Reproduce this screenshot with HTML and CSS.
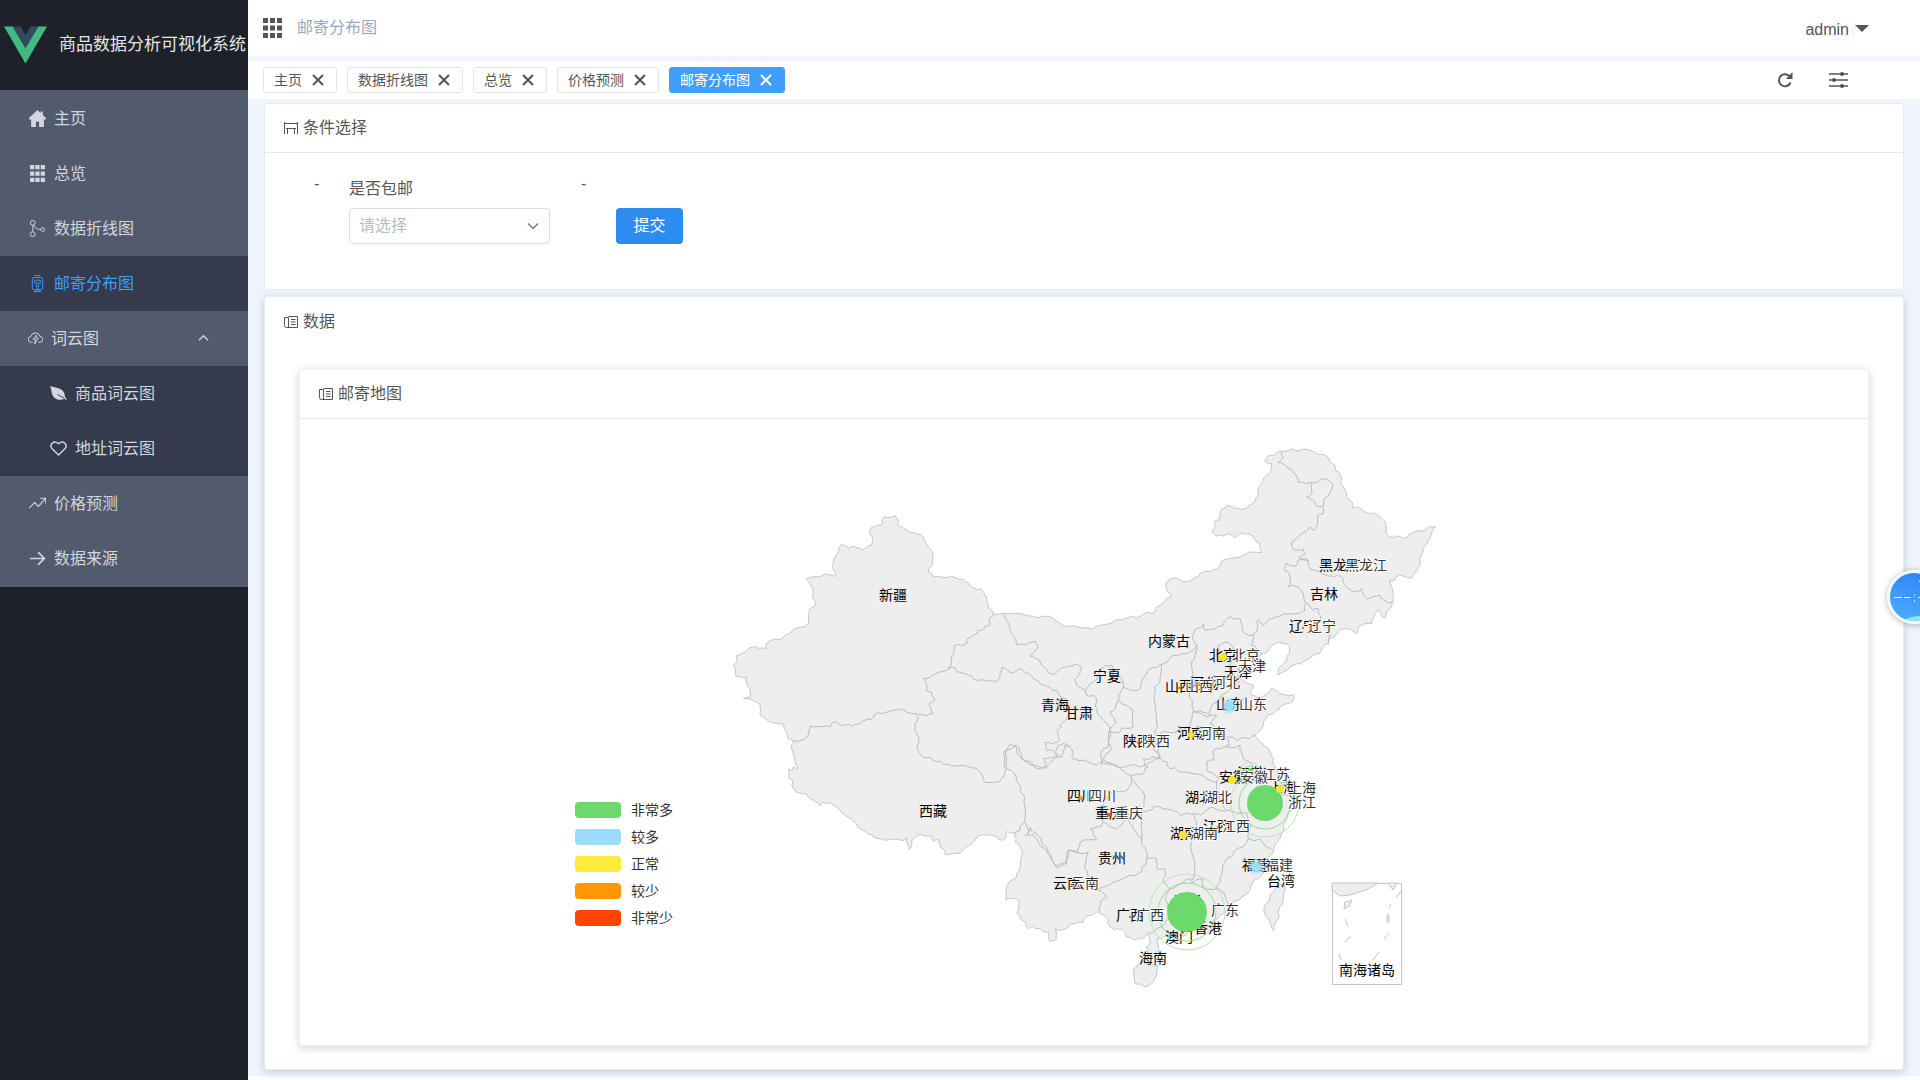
FILE: index.html
```html
<!DOCTYPE html>
<html lang="zh-CN">
<head>
<meta charset="utf-8">
<meta name="viewport" content="width=device-width, initial-scale=1">
<title>商品数据分析可视化系统</title>
<link rel="stylesheet" href="styles.css">
</head>
<body>
<aside class="sidebar">
  <div class="brand">
    <svg class="brand-logo" viewBox="0 0 44 38" aria-hidden="true"><path fill="#42b983" d="M0 0h9l13 22L35 0h9L22 38z"/><path fill="#35495e" d="M9 0h8l5 9 5-9h8L22 22z"/></svg>
    <span>商品数据分析可视化系统</span>
  </div>
  <nav class="menu">
    <a class="item" href="#"><svg class="icon" viewBox="0 0 16 16"><path fill="currentColor" d="M8 0 0 7.5V9h2v7h4.500v-5h3v5H14V9h2V7.500L13 4.700V1.500h-2v1.300z"/></svg>主页</a>
    <a class="item" href="#"><svg class="icon" viewBox="0 0 16 16"><path fill="currentColor" d="M1 0h4v4H1zM6 0h4v4H6zM11 0h4v4h-4zM1 6h4v4H1zM6 6h4v4H6zM11 6h4v4h-4zM1 12h4v4H1zM6 12h4v4H6zM11 12h4v4h-4z"/></svg>总览</a>
    <a class="item" href="#"><svg class="icon" viewBox="0 0 16 18"><g fill="none" stroke="currentColor"><circle cx="3" cy="3" r="2.500"/><circle cx="3" cy="15" r="2.500"/><circle cx="13.500" cy="10" r="2"/><path d="M3 5.500v7M4 5.500q2 4.500 7.500 4.500"/></g></svg>数据折线图</a>
    <a class="item active" href="#"><svg class="icon" viewBox="0 0 16 18"><g fill="none" stroke="currentColor"><rect x="2.500" y="2.500" width="11" height="13" rx="2"/><path d="M5 .500h6M5 5.500h6v3H5zM4 17.500h8M6 17l2-3 2 3"/><circle cx="8" cy="11.500" r="1.500"/></g></svg>邮寄分布图</a>
    <a class="item parent" href="#"><svg class="icon small" viewBox="0 0 16 16"><g fill="none" stroke="currentColor"><path d="M5 12H3.500A3 3 0 0 1 3 6a5 5 0 0 1 9.800 0 3 3 0 0 1 0 6H11"/><path d="M9 4.500 5.500 9H8l-1 5 4-6.500H8.500z"/></g></svg>词云图<svg class="caret" viewBox="0 0 12 12"><path fill="none" stroke="currentColor" stroke-width="1.500" d="m1 8 5-5 5 5"/></svg></a>
    <a class="item sub" href="#"><svg class="icon" viewBox="0 0 18 16"><path fill="currentColor" d="M0 0c7 2 12 2 15 7l1 5 2 2-1 .700-2-1.500c-3 2.800-9 1.500-11-1.500C1 8 2 4 0 0z"/><path d="m8 9 7 4" stroke="#333b4d"/></svg>商品词云图</a>
    <a class="item sub" href="#"><svg class="icon" viewBox="0 0 18 16"><path fill="none" stroke="currentColor" stroke-width="1.500" d="M9 15 2 8C-1 4 4-1.500 9 3c5-4.500 10 1 7 5z"/></svg>地址词云图</a>
    <a class="item" href="#"><svg class="icon" viewBox="0 0 18 14"><path fill="none" stroke="currentColor" stroke-width="1.200" d="m0 12 6-6 4 4 7-8M12 1.500h5.500V7"/></svg>价格预测</a>
    <a class="item" href="#"><svg class="icon" viewBox="0 0 16 16"><path fill="none" stroke="currentColor" stroke-width="1.500" d="M1 8h13M8.500 2l6 6-6 6"/></svg>数据来源</a>
  </nav>
</aside>

<div class="main">
  <header class="topbar">
    <svg class="grid-icon" viewBox="0 0 19 20"><path fill="#555" d="M0 0h5v5H0zM7 0h5v5H7zM14 0h5v5h-5zM0 7.500h5v5H0zM7 7.500h5v5H7zM14 7.500h5v5h-5zM0 15h5v5H0zM7 15h5v5H7zM14 15h5v5h-5z"/></svg>
    <span class="crumb">邮寄分布图</span>
    <button class="user" type="button">admin<svg viewBox="0 0 14 7"><path fill="currentColor" d="M0 0h14L7 7z"/></svg></button>
  </header>

  <div class="tabs">
    <a class="tab" href="#">主页<svg viewBox="0 0 12 12"><path d="m1 1 10 10M11 1 1 11"/></svg></a>
    <a class="tab" href="#">数据折线图<svg viewBox="0 0 12 12"><path d="m1 1 10 10M11 1 1 11"/></svg></a>
    <a class="tab" href="#">总览<svg viewBox="0 0 12 12"><path d="m1 1 10 10M11 1 1 11"/></svg></a>
    <a class="tab" href="#">价格预测<svg viewBox="0 0 12 12"><path d="m1 1 10 10M11 1 1 11"/></svg></a>
    <a class="tab current" href="#">邮寄分布图<svg viewBox="0 0 12 12"><path d="m1 1 10 10M11 1 1 11"/></svg></a>
    <div class="tools">
      <button type="button" aria-label="刷新"><svg width="16" height="16" viewBox="0 0 16 16"><path fill="none" stroke="#555" stroke-width="2" d="M13.500 10.500a6 6 0 1 1-.500-5.500"/><path fill="#555" d="M15.500 0v7H9z"/></svg></button>
      <button type="button" aria-label="设置"><svg width="19" height="16" viewBox="0 0 19 16"><path stroke="#555" stroke-width="1.500" d="M0 2h19M0 8h19M0 14h19"/><g fill="#555"><circle cx="13" cy="2" r="2"/><circle cx="5" cy="8" r="2"/><circle cx="13" cy="14" r="2"/></g></svg></button>
    </div>
  </div>

  <main class="content">
    <section class="card">
      <h2 class="card-title"><svg viewBox="0 0 14 12"><path fill="none" stroke="currentColor" d="M.500 0v12M13.500 0v12M0 1.500h14M2 6.500h10M3.500 6v6M10.500 6v6"/></svg>条件选择</h2>
      <form class="filters">
        <span class="dash">-</span>
        <div class="field">
          <label for="postage">是否包邮</label>
          <div class="select-box">
            <select id="postage"><option>请选择</option><option>是</option><option>否</option></select>
            <svg viewBox="0 0 12 12"><path fill="none" stroke="#777" stroke-width="1.500" d="m1 3.500 5 5 5-5"/></svg>
          </div>
        </div>
        <span class="dash">-</span>
        <button class="submit" type="button">提交</button>
      </form>
    </section>

    <section class="card raised">
      <h2 class="card-title plain"><svg viewBox="0 0 14 12"><path fill="none" stroke="currentColor" d="M4.500.500h9v11h-11q-2 0-2-2v-8h4v10M7 3.500h4.500M7 6h4.500M7 8.500h4.500"/></svg>数据</h2>
      <div class="data">
        <section class="card chart">
          <h2 class="card-title"><svg viewBox="0 0 14 12"><path fill="none" stroke="currentColor" d="M4.500.500h9v11h-11q-2 0-2-2v-8h4v10M7 3.500h4.500M7 6h4.500M7 8.500h4.500"/></svg>邮寄地图</h2>
          <svg class="map" viewBox="300 417 1568 626" role="img" aria-label="邮寄地图">
            <g class="legend">
              <rect x="575" y="800" width="46" height="16" rx="4" fill="#6bd96b"/><text x="631" y="808">非常多</text>
              <rect x="575" y="827" width="46" height="16" rx="4" fill="#9bdcfa"/><text x="631" y="835">较多</text>
              <rect x="575" y="854" width="46" height="16" rx="4" fill="#ffeb3b"/><text x="631" y="862">正常</text>
              <rect x="575" y="881" width="46" height="16" rx="4" fill="#ff9800"/><text x="631" y="889">较少</text>
              <rect x="575" y="908" width="46" height="16" rx="4" fill="#ff4500"/><text x="631" y="916">非常少</text>
            </g>
            <g id="land" class="land"></g>
            <g id="borders" class="borders"></g>
            <g class="islands">
              <path class="frame" d="M1332.500 881.500h69v101h-69z"/>
              <path d="M1332 881h46l-12 7-16 5-10 1-8-6zM1388 881h9l-4 7zM1345 900l7-2-3 6-5 3zM1401 889l-5 7M1391 902l-2 4M1345 917l3 7M1387 913h2v7h-2zM1345 940l6-6M1384 937l5-6M1339 952l2 6M1373 958l6-8"/>
            </g>
            <g class="name">
              <text x="879" y="593">新疆</text><text x="919" y="809">西藏</text><text x="1041" y="703">青海</text><text x="1065" y="711">甘肃</text><text x="1093" y="674">宁夏</text><text x="1148" y="639">内蒙古</text><text x="1310" y="592">吉林</text><text x="1319" y="563">黑龙江</text><text x="1289" y="624">辽宁</text><text x="1209" y="653">北京</text><text x="1224" y="670">天津</text><text x="1190" y="681">河北</text><text x="1165" y="684">山西</text><text x="1216" y="702">山东</text><text x="1177" y="731">河南</text><text x="1123" y="739">陕西</text><text x="1237" y="771">江苏</text><text x="1219" y="775">安徽</text><text x="1269" y="785">上海</text><text x="1251" y="800">浙江</text><text x="1185" y="795">湖北</text><text x="1203" y="824">江西</text><text x="1170" y="831">湖南</text><text x="1067" y="794">四川</text><text x="1095" y="811">重庆</text><text x="1098" y="856">贵州</text><text x="1053" y="881">云南</text><text x="1116" y="913">广西</text><text x="1173" y="898">广东</text><text x="1194" y="926">香港</text><text x="1165" y="935">澳门</text><text x="1139" y="956">海南</text><text x="1242" y="863">福建</text><text x="1267" y="879">台湾</text><text x="1339" y="968">南海诸岛</text>
            </g>
            <g class="ripple">
              <circle cx="1265" cy="801" r="26"/><circle class="far" cx="1265" cy="801" r="34"/>
              <circle cx="1187" cy="910" r="29"/><circle class="far" cx="1187" cy="910" r="38"/>
              <circle cx="1250" cy="770" r="6"/><circle class="far" cx="1250" cy="770" r="10"/>
            </g>
            <g fill="#6bd96b"><circle cx="1265" cy="801" r="18"/><circle cx="1187" cy="910" r="20"/><circle cx="1250" cy="769" r="3"/></g>
            <g fill="#9bdcfa"><circle cx="1229" cy="704" r="5"/><circle cx="1256" cy="865" r="5"/><circle cx="1229" cy="704" r="8" opacity=".4"/><circle cx="1256" cy="865" r="8" opacity=".4"/></g>
            <g class="label">
              <text x="1345" y="563">黑龙江</text><text x="1308" y="624">辽宁</text><text x="1212" y="680">河北</text><text x="1185" y="684">山西</text><text x="1232" y="653">北京</text><text x="1238" y="664">天津</text><text x="1239" y="702">山东</text><text x="1198" y="731">河南</text><text x="1142" y="739">陕西</text><text x="1262" y="772">江苏</text><text x="1240" y="775">安徽</text><text x="1288" y="786">上海</text><text x="1288" y="800">浙江</text><text x="1204" y="795">湖北</text><text x="1222" y="824">江西</text><text x="1190" y="831">湖南</text><text x="1088" y="794">四川</text><text x="1115" y="811">重庆</text><text x="1071" y="881">云南</text><text x="1136" y="913">广西</text><text x="1211" y="908">广东</text><text x="1265" y="863">福建</text>
            </g>
            <g fill="#ffe62e"><circle cx="1223" cy="655" r="4"/><circle cx="1191" cy="733" r="3"/><circle cx="1232" cy="778" r="4"/><circle cx="1280" cy="787" r="4"/><circle cx="1183" cy="833" r="4"/></g>
            <g fill="#ff9800"><circle cx="1081" cy="796" r="2"/></g>
            <g fill="#ff4500"><circle cx="1109" cy="813" r="2"/><circle cx="1179" cy="686" r="1"/><circle cx="1303" cy="626" r="1"/><circle cx="1231" cy="667" r="1"/><circle cx="1198" cy="797" r="1"/><circle cx="1218" cy="825" r="1"/><circle cx="1130" cy="915" r="1"/><circle cx="1340" cy="565" r="1"/><circle cx="1138" cy="741" r="1"/></g>
          </svg>
        </section>
      </div>
    </section>
  </main>
</div>

<button class="float" type="button" aria-label="网速"><svg viewBox="0 0 48 48"><path d="M10 48q14-7 38-6v6z" fill="#8fe3fb"/><path d="M29 8l8 4" stroke="#fff"/><path stroke="#e8fbd8" d="M4 24.500h8M14 24.500h7M28 24.500h12"/><path fill="#bfe3ff" d="M24 21h1v2h-1zM24 27h1v2h-1z"/></svg></button>
<script src="map.js"></script>
</body>
</html>
```

FILE: styles.css
```css
* { box-sizing: border-box; }
body {
  margin: 0;
  min-height: 100vh;
  display: flex;
  background: #fdfefe;
  color: #555;
  font: 16px/24px "Liberation Sans", "Noto Sans CJK SC", sans-serif;
}
a { color: inherit; text-decoration: none; }
button { font: inherit; color: inherit; border: 0; padding: 0; background: none; }
svg { display: block; flex: none; }

.sidebar { flex: 0 0 248px; background: #1e2128; color: #d3d6dc; }
.brand { height: 90px; display: flex; align-items: center; gap: 12px; padding-left: 4px; font-size: 17px; white-space: nowrap; color: #e4e6ea; overflow: hidden; }
.brand-logo { width: 43px; height: 38px; }
.menu { background: #525b6d; padding: 1px 0; }
.item { display: flex; align-items: center; gap: 8px; height: 55px; padding-left: 29px; }
.icon { width: 17px; height: 17px; }
.icon.small { width: 15px; height: 15px; }
.item.active, .item.sub { background: #333b4d; }
.item.active { color: #409eff; }
.item.parent { padding-left: 28px; }
.item.sub { padding-left: 50px; }
.caret { width: 11px; height: 11px; margin: 0 39px 0 auto; }

.main { flex: 1; min-width: 0; }
.topbar { height: 56px; display: flex; align-items: center; gap: 15px; padding: 0 51px 0 15px; background: #fff; }
.grid-icon { width: 19px; height: 20px; }
.crumb { color: #97a8be; }
.user { display: flex; align-items: center; gap: 6px; margin-left: auto; padding-top: 4px; }
.user svg { width: 14px; height: 7px; margin-bottom: 4px; }

.tabs { display: flex; align-items: center; gap: 10px; height: 43px; padding: 0 72px 0 15px; border-top: 5px solid #f0f5fd; background: #fff; }
.tab { display: flex; align-items: center; gap: 10px; height: 26px; padding: 0 12px 0 10px; border: 1px solid #dfe2e8; border-radius: 3px; font-size: 14px; }
.tab svg { width: 12px; height: 12px; fill: none; stroke: currentColor; stroke-width: 2; }
.tab.current { background: #409eff; border-color: #409eff; color: #fff; }
.tools { display: flex; gap: 36px; margin-left: auto; }

.content { padding: 4px 16px 6px; background: #f0f5fd; }
.card { background: #fff; border: 1px solid #e6ebf2; border-radius: 4px; }
.card + .card { margin-top: 6px; }
.raised { box-shadow: 0 2px 8px rgba(60, 80, 110, .25); }
.card-title { display: flex; align-items: center; gap: 5px; height: 49px; margin: 0; padding-left: 19px; border-bottom: 1px solid #e6e8ec; font-size: 16px; font-weight: 400; }
.card-title svg { width: 14px; height: 12px; }
.card-title.plain { border-bottom: 0; }

.filters { display: flex; align-items: flex-start; padding: 24px 0 45px 49px; }
.dash { flex: 0 0 35px; line-height: 14px; }
.field { flex: 0 0 232px; }
.field label { display: block; margin-bottom: 7px; }
.select-box { position: relative; width: 201px; }
.select-box select { width: 100%; height: 36px; padding: 0 9px; appearance: none; border: 1px solid #d9dce2; border-radius: 4px; background: #fff; color: #b8bcc4; font: inherit; }
.select-box svg { position: absolute; right: 11px; top: 12px; width: 12px; height: 12px; pointer-events: none; }
.submit { align-self: flex-end; width: 67px; height: 36px; border-radius: 4px; background: #2d8cf0; color: #fff; }

.data { padding: 23px 34px 23px; }
.chart { border-color: #eef0f2; box-shadow: 0 2px 8px rgba(0, 0, 0, .18); }
.map { width: 100%; height: auto; font-size: 14px; }
.map text { dominant-baseline: central; }
.legend { fill: #333; }
.land path { fill: #eee; stroke: #c6c6c6; stroke-linejoin: round; }
.borders path { fill: none; stroke: #bbb; stroke-linejoin: round; }
.islands path { fill: #eee; stroke: #c4c4c4; }
.islands .frame { fill: none; }
.name { fill: #000; }
.label { fill: #333; stroke: #fff; stroke-width: 2; paint-order: stroke; }
.ripple circle { fill: none; stroke: #8fdf8f; }
.ripple .far { stroke: #b5e8b5; }

.float { position: fixed; right: -21px; top: 570px; width: 54px; height: 54px; overflow: hidden; border: 3px solid #f2fbff; border-radius: 50%; background: linear-gradient(200deg, #2a80f5, #4fb0ff); box-shadow: 0 1px 6px rgba(0, 0, 0, .3); }
```

FILE: map.js
```js
// Each sheet is traced at three units per map unit, from its own origin.
const sheets = { w: [720, 480], n: [1050, 480], e: [1180, 430], s: [1000, 680] };

// A small seeded generator keeps the fractal coastline stable between loads.
let seed = 7;
const rand = () => (seed = (seed * 16807) % 2147483647) / 2147483647 - 0.5;

function points(sheet, list) {
  const [ox, oy] = sheets[sheet];
  return list.trim().split(/\s+/).map(p => {
    const [x, y] = p.split(",").map(Number);
    return [ox + x / 3, oy + y / 3];
  });
}

function roughen(pts) {
  let out = pts;
  for (let pass = 0; pass < 2; pass++) {
    const next = [out[0]];
    for (let i = 1; i < out.length; i++) {
      const [ax, ay] = out[i - 1], [bx, by] = out[i];
      const d = Math.hypot(bx - ax, by - ay), k = d > 3 ? Math.min(d * 0.4, 4) : 0;
      next.push([(ax + bx) / 2 + rand() * k, (ay + by) / 2 + rand() * k], [bx, by]);
    }
    out = next;
  }
  return out;
}

function draw(group, pts, closed) {
  const path = document.createElementNS("http://www.w3.org/2000/svg", "path");
  path.setAttribute("d", "M" + roughen(pts).map(p => p[0].toFixed(1) + " " + p[1].toFixed(1)).join("L") + (closed ? "Z" : ""));
  document.getElementById(group).append(path);
}

const mainland = [
  ["w", "990,403 925,402 852,394 820,395 800,360 795,340 785,322 770,322 735,298 715,291 640,283 626,270 627,258 637,244 636,208 622,190 612,168 585,152 570,152 535,132 526,101 492,104 488,125 456,135 449,150 455,190 430,203 420,198 385,198 364,188 352,215 340,240 338,260 346,282 318,275 258,292 270,303 278,345 285,372 270,380 265,425 238,435 185,470 150,475 138,500 112,503 108,492 85,500 50,520 46,545 38,550 48,583 78,585 85,615 92,642 70,650 105,658 120,675 122,700 135,708 192,727 200,755 220,776 213,795 222,820 235,858 220,855 217,865 206,860 207,880 218,895 220,920 228,930 258,935 300,972 308,960 330,962 365,992 395,1012 410,1030 440,1052 465,1068 500,1075 535,1073 560,1068 567,1102 575,1075 595,1060 635,1065 640,1080 655,1072 660,1095 675,1105 675,1118 720,1115 745,1092 790,1058 815,1057 850,1075 862,1048 885,1052 885,1080 900,1095 902,1150 890,1175"],
  ["s", "30,598 18,655 45,650 60,660 50,690 75,720 85,740 100,735 125,745 145,750 150,780 165,775 165,740 200,740 215,725 250,720 270,700 295,690 310,700 330,735 345,745 365,740 380,765 420,768 445,755 450,775 438,795 445,820 465,825 475,795 470,770 495,762 540,760 570,745 600,740 650,712 690,690 700,660 735,640 750,610 775,590 800,560 795,535 812,520 830,480 850,430 862,400 880,370 865,340 800,318 848,318 860,308 840,300 830,270 820,230 800,195 780,180 765,160 790,120 830,85 850,70 880,55 882,38"],
  ["n", "690,635 665,618 645,640 620,648 605,640 610,610 585,600 565,585 565,560 580,545 600,530 640,515 665,490 690,482 717,490 712,520 685,560 682,578 700,570 740,545 790,520 835,485 860,455"],
  ["e", "475,595 500,590 530,605 540,580 575,575 590,540 600,535 615,558 620,540 635,520 637,470 630,445 655,430 695,437 720,400 730,350 750,320 755,300 767,284 740,290 690,305 680,318 630,315 620,290 610,265 580,242 555,240 515,228 505,200 490,165 485,140 465,100 440,72 420,68 380,52 340,52 300,58 265,72 253,85 275,95 272,120 250,140 235,170 225,207 185,232 140,220 120,250 97,297 108,312 150,305 165,318 185,303 215,310 240,340 245,362 200,365 150,380 130,385 110,410 60,425 30,448 0,445"],
  ["n", "375,287 350,300 348,320 363,345 330,370 310,395 260,408 200,412 125,442 60,433 20,418"]
];
draw("land", mainland.flatMap(([s, l]) => points(s, l)), true);
draw("land", points("s", "855,612 850,650 835,690 822,745 810,720 795,700 793,675 810,640 835,605"), true);
draw("land", points("s", "400,860 430,835 475,850 470,880 435,915 405,905"), true);

[
  ["w", "820,395 808,408 810,430 790,442 775,445 745,468 730,490 703,492 698,520 683,562 655,570 610,590 620,600 618,625 635,632 645,655 627,665 638,695 600,698 585,695"],
  ["w", "585,695 550,683 515,686 475,692 455,712 430,715 395,732 365,730 348,718 330,735 300,735 272,732 255,770 220,776"],
  ["w", "585,695 595,705 585,740 595,765 592,795 610,825 650,838 695,852 760,858 785,875 790,895 830,900 852,880 858,857"],
  ["w", "683,562 705,557 730,575 755,582 760,592 800,597 825,600 840,585 845,557 880,573 905,562 940,590 985,615 1010,625 1040,660 1045,700 1025,725 1012,745 1018,775 1000,785 975,782 980,805 1010,815 1025,825"],
  ["w", "858,857 855,810 870,787 890,790 905,825 940,850 980,857 1000,830 1025,825 1035,790 1055,790"],
  ["w", "858,857 885,875 903,915 912,960 913,1020 900,1045 885,1055"],
  ["w", "913,1020 922,1060 930,1035 950,1055 965,1078 985,1110 1010,1152 1040,1145 1045,1105 1075,1110"],
  ["w", "850,394 870,440 890,488 945,477 952,500 930,522 960,540 1000,578 1025,557 1065,547 1085,555 1080,575 1065,595 1100,640"],
  ["n", "110,640 105,630 130,600 150,560 185,548 190,580 215,590 220,615 250,625 270,620 275,595 300,560 340,545 370,520 395,515 440,490"],
  ["n", "110,640 140,650 140,690 160,715 180,740 195,715 180,690 205,655 220,615"],
  ["n", "205,655 250,685 250,735 215,740 205,755 180,745 175,780 185,800 160,830 155,850"],
  ["n", "335,545 330,600 312,640 320,700 318,770 310,800 330,825"],
  ["n", "440,490 430,475 440,440 460,425 468,445 520,430 540,405 570,410 585,455 610,460"],
  ["n", "610,460 605,490 635,515"],
  ["n", "440,490 425,540 430,580 415,600 420,650 430,690 480,700 490,665 530,630 570,600"],
  ["n", "430,690 420,730 385,745 330,755"],
  ["n", "525,480 505,490 500,515 520,540 550,530 550,500 525,480"],
  ["n", "550,520 535,555 545,585 568,588"],
  ["n", "430,690 475,705 500,700 480,725 500,745 530,765 560,775 600,770 615,760"],
  ["n", "160,830 200,855 240,850 285,850 330,825"],
  ["e", "303,58 310,75 295,92 320,105 345,125 355,150 410,152 432,140 458,165 430,218 430,245 415,250 403,295 390,285 335,330 350,355 370,350 375,365 355,375 360,382 385,385 392,412 440,430 470,430 490,440 500,465 520,480 545,470 560,500 600,490 610,505 637,510"],
  ["e", "395,152 395,185 380,195 400,205 412,225 430,218"],
  ["e", "385,385 355,385 350,400 318,395 312,410 328,425 325,465 355,465 372,500 378,515 400,535 415,530 430,575 445,600 445,635"],
  ["e", "378,515 375,535 330,545 290,555 250,580 235,562 228,600 215,610"],
  ["s", "15,255 15,205 45,190 65,230 110,260 135,255 130,230 170,225 175,190 205,190 215,225 245,235 290,250 305,240 350,250 395,280"],
  ["s", "305,240 305,210 325,195 330,135"],
  ["s", "395,280 430,275 445,255 430,230 480,230 510,260 560,270 620,290 650,300"],
  ["s", "480,230 465,180 470,165"],
  ["s", "395,280 390,310 370,330 340,325 320,350 300,380 310,420"],
  ["s", "395,290 430,330 425,390 415,370 380,400 400,440 425,470"],
  ["s", "310,420 350,440 380,400"],
  ["s", "425,390 425,470 440,530 425,570"],
  ["s", "425,390 460,375 520,385 545,400 580,395 600,400 640,375 680,385"],
  ["s", "580,395 590,430 575,480 585,540 580,590"],
  ["s", "745,470 700,510 680,530 660,590 650,620"],
  ["s", "740,395 750,440 745,470 780,470 800,495 815,500"],
  ["s", "650,300 660,340 680,385 740,395 760,340 800,318"],
  ["s", "690,190 660,200 640,205 640,235 620,240 625,270 655,285 650,300"],
  ["s", "690,190 680,170"],
  ["s", "670,195 720,190 730,230 760,250 750,290 780,320"],
  ["s", "310,420 270,440 290,475 240,480 230,510 265,510 255,560 265,610 310,615 340,600 390,580 425,570"],
  ["s", "75,460 100,460 135,500 170,555 200,545 205,505 235,510"],
  ["s", "265,610 300,625 320,645 300,660 300,690"],
  ["s", "440,530 470,530 470,560 495,560 490,600 510,620 560,590 580,590 575,605 610,590 610,615 650,620 670,630 690,690"],
  ["s", "510,620 495,650 510,700 470,740 445,755"]
].forEach(([s, l]) => draw("borders", points(s, l), false));
```
